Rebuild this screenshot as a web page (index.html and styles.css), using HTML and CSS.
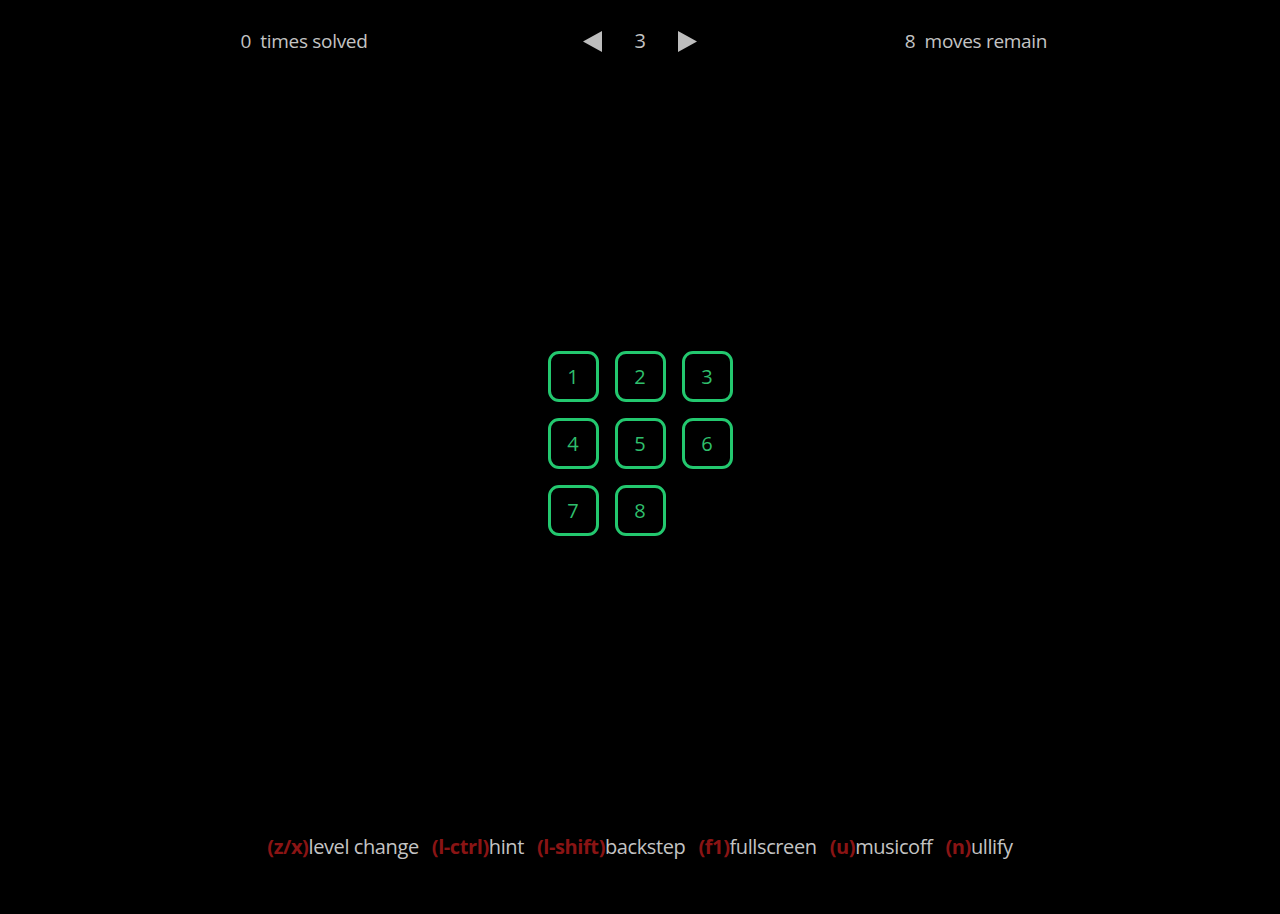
FILE: index.html
```html
<!DOCTYPE html>
<html>
<head>
<meta charset="utf-8">
<link rel="stylesheet" href="styles.css">
</head>
<body>
<div class="page">
  <header class="topbar">
    <div class="cell">0&nbsp; times solved</div>
    <div class="cell nav">
      <svg class="arrow" width="20" height="21" viewBox="0 0 20 21"><polygon points="19,0 19,21 0,10.5" fill="#bdbdbd"/></svg>
      <span class="level">3</span>
      <svg class="arrow" width="20" height="21" viewBox="0 0 20 21"><polygon points="1,0 1,21 20,10.5" fill="#bdbdbd"/></svg>
    </div>
    <div class="cell">8&nbsp; moves remain</div>
  </header>
  <main class="board-wrap">
    <div class="board">
      <div class="tile">1</div>
      <div class="tile">2</div>
      <div class="tile">3</div>
      <div class="tile">4</div>
      <div class="tile">5</div>
      <div class="tile">6</div>
      <div class="tile">7</div>
      <div class="tile">8</div>
      <div class="empty"></div>
    </div>
  </main>
  <footer class="help">
    <span class="item"><span class="key">(z/x)</span>level change</span>
    <span class="item"><span class="key">(l-ctrl)</span>hint</span>
    <span class="item"><span class="key">(l-shift)</span>backstep</span>
    <span class="item"><span class="key">(f1)</span>fullscreen</span>
    <span class="item"><span class="key">(u)</span>musicoff</span>
    <span class="item"><span class="key">(n)</span>ullify</span>
  </footer>
</div>
</body>
</html>
```
FILE: styles.css
```css
html, body {
  margin: 0;
  padding: 0;
  background: #000;
}
body {
  font-family: "Open Sans", "Noto Sans", sans-serif;
  color: #c4c4c4;
}
.page {
  width: 1280px;
  height: 914px;
  display: flex;
  flex-direction: column;
}
.topbar {
  width: 1008px;
  margin: 0 auto;
  padding-top: 28px;
  display: grid;
  grid-template-columns: repeat(3, 1fr);
  font-size: 19px;
  line-height: 26px;
  height: 26px;
}
.cell {
  display: flex;
  justify-content: center;
  align-items: center;
  letter-spacing: -0.3px;
}
.level {
  width: 74px;
  text-align: center;
  font-size: 20px;
}
.arrow {
  display: block;
}
.board-wrap {
  flex: 1;
  display: flex;
  justify-content: center;
  padding-top: 297px;
}
.board {
  display: grid;
  grid-template-columns: repeat(3, 51px);
  grid-auto-rows: 51px;
  gap: 16px;
  height: 185px;
}
.tile {
  box-sizing: border-box;
  border: 3px solid #23c86f;
  border-radius: 11px;
  display: flex;
  align-items: center;
  justify-content: center;
  color: #2fbf6c;
  font-size: 20px;
}
.help {
  display: flex;
  justify-content: center;
  gap: 13px;
  font-size: 20px;
  line-height: 26px;
  padding-bottom: 54px;
  letter-spacing: -0.4px;
}
.key {
  color: #8a1414;
  font-weight: 700;
}
```
